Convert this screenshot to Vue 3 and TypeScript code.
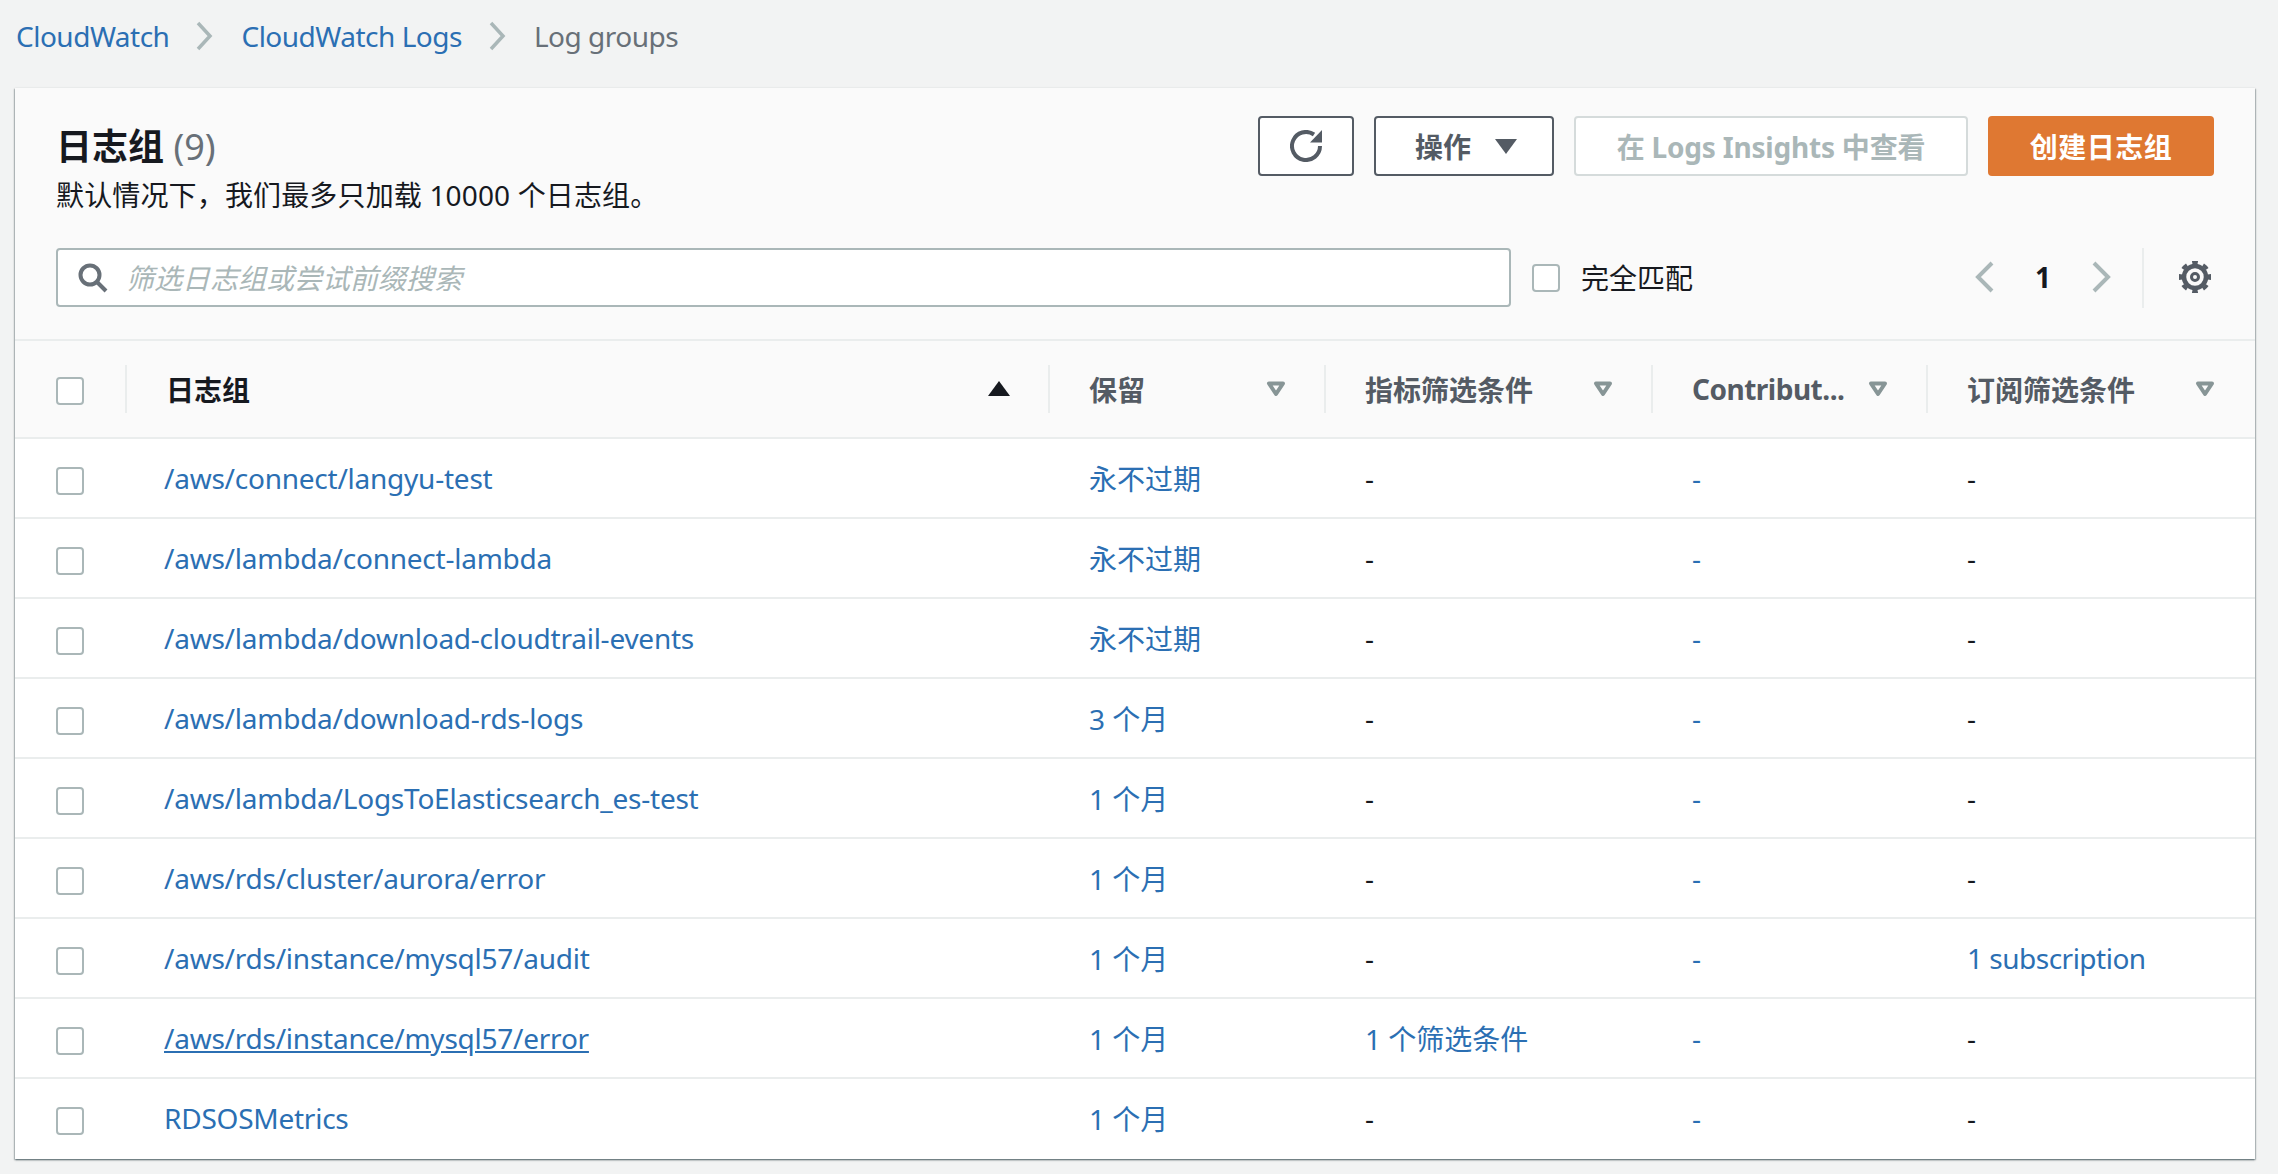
<script setup lang="ts">
interface LogGroup {
  name: string;
  retention: string;
  metric?: string;
  subscription?: string;
  hover?: boolean;
}

const columns = [
  { key: "retention", label: "保留" },
  { key: "metric", label: "指标筛选条件" },
  { key: "contributor", label: "Contribut..." },
  { key: "subscription", label: "订阅筛选条件" },
];

const logGroups: LogGroup[] = [
  { name: "/aws/connect/langyu-test", retention: "永不过期" },
  { name: "/aws/lambda/connect-lambda", retention: "永不过期" },
  { name: "/aws/lambda/download-cloudtrail-events", retention: "永不过期" },
  { name: "/aws/lambda/download-rds-logs", retention: "3 个月" },
  { name: "/aws/lambda/LogsToElasticsearch_es-test", retention: "1 个月" },
  { name: "/aws/rds/cluster/aurora/error", retention: "1 个月" },
  { name: "/aws/rds/instance/mysql57/audit", retention: "1 个月", subscription: "1 subscription" },
  { name: "/aws/rds/instance/mysql57/error", retention: "1 个月", metric: "1 个筛选条件", hover: true },
  { name: "RDSOSMetrics", retention: "1 个月" },
];
</script>

<template>
  <div class="page">
    <nav class="crumbs">
      <a class="link">CloudWatch</a>
      <svg class="crumb-sep" viewBox="0 0 18 30"><path d="M3 2l12 13L3 28" /></svg>
      <a class="link">CloudWatch Logs</a>
      <svg class="crumb-sep" viewBox="0 0 18 30"><path d="M3 2l12 13L3 28" /></svg>
      <span class="crumb-current">Log groups</span>
    </nav>

    <section class="panel">
      <header class="panel-head">
        <div class="head-top">
          <div class="titles">
            <h1 class="title">日志组 <span class="count">(9)</span></h1>
            <p class="desc">默认情况下，我们最多只加载 10000 个日志组。</p>
          </div>
          <div class="actions">
            <button class="btn btn-icon">
              <svg width="32" height="32" viewBox="0 0 32 32" class="refresh">
                <path d="M30 16a14 14 0 1 1-6-11.5" />
                <path class="solid" d="M32 0v12.5H20z" />
              </svg>
            </button>
            <button class="btn btn-menu">
              操作
              <svg width="22" height="16" viewBox="0 0 22 16"><path class="solid" d="M0 1h22L11 16z" /></svg>
            </button>
            <button class="btn btn-disabled">在 Logs Insights 中查看</button>
            <button class="btn btn-primary">创建日志组</button>
          </div>
        </div>
        <div class="head-filter">
          <div class="search">
            <svg width="32" height="32" viewBox="0 0 32 32" class="search-icon">
              <circle cx="13" cy="13" r="9.5" />
              <path d="M20 20l9 9" />
            </svg>
            <input class="search-input" placeholder="筛选日志组或尝试前缀搜索" />
          </div>
          <span class="checkbox"></span>
          <span class="exact">完全匹配</span>
          <div class="pager">
            <svg class="pager-arrow" viewBox="0 0 20 32"><path d="M17 2L3 16l14 14" /></svg>
            <span class="page-num">1</span>
            <svg class="pager-arrow" viewBox="0 0 20 32"><path d="M3 2l14 14L3 30" /></svg>
          </div>
          <div class="settings">
            <svg width="32" height="32" viewBox="0 0 32 32" class="gear">
              <circle class="gear-body" cx="16" cy="16" r="11" />
              <circle class="gear-teeth" cx="16" cy="16" r="14.5" pathLength="80" />
              <circle class="gear-hub" cx="16" cy="16" r="3.5" />
            </svg>
          </div>
        </div>
      </header>

      <div class="table-head grid">
        <div class="cell-check"><span class="checkbox"></span></div>
        <div class="th th-name">
          <span>日志组</span>
          <svg width="22" height="16" viewBox="0 0 22 16"><path class="sort" d="M0 15h22L11 0z" /></svg>
        </div>
        <div v-for="col in columns" :key="col.key" class="th">
          <span :class="{ condensed: col.key === 'contributor' }">{{ col.label }}</span>
          <svg width="20" height="16" viewBox="0 0 20 16"><path class="filter" d="M3 2.5h14L10 13z" /></svg>
        </div>
      </div>

      <div v-for="group in logGroups" :key="group.name" class="row grid">
        <div class="cell-check"><span class="checkbox"></span></div>
        <div class="td td-name"><a class="link" :class="{ hovered: group.hover }">{{ group.name }}</a></div>
        <div class="td"><a class="link">{{ group.retention }}</a></div>
        <div class="td">
          <a v-if="group.metric" class="link">{{ group.metric }}</a>
          <template v-else>-</template>
        </div>
        <div class="td"><a class="link">-</a></div>
        <div class="td">
          <a v-if="group.subscription" class="link condensed">{{ group.subscription }}</a>
          <template v-else>-</template>
        </div>
      </div>
    </section>
  </div>
</template>

<style>
body {
  background: #f2f3f3;
}
</style>

<style scoped>
.page {
  width: 2278px;
  height: 1174px;
  overflow: hidden;
  font-family: "Noto Sans", "Noto Sans CJK SC", sans-serif;
  font-size: 28px;
  color: #16191f;
  background: #f2f3f3;
}

.link {
  color: #2b6fb3;
}

.hovered {
  text-decoration: underline;
}

.condensed {
  letter-spacing: -0.5px;
}

.crumbs {
  height: 88px;
  padding: 0 0 16px 16px;
  box-sizing: border-box;
  display: flex;
  align-items: center;
  gap: 26px;
  letter-spacing: -0.5px;
}

.crumb-sep {
  width: 18px;
  height: 30px;
  margin-right: 2px;
  fill: none;
  stroke: #aab7b8;
  stroke-width: 3.5;
}

.crumb-current {
  color: #687078;
}

.panel {
  width: 2240px;
  margin-left: 15px;
  background: #fff;
  box-shadow: 0 1px 2px 0 rgba(0, 28, 36, 0.5), 1px 1px 1px 0 rgba(0, 28, 36, 0.15), -1px 1px 1px 0 rgba(0, 28, 36, 0.15);
}

.panel-head {
  height: 253px;
  box-sizing: border-box;
  padding: 28px 41px 0 41px;
  background: #fafafa;
  border-bottom: 2px solid #eaeded;
}

.head-top {
  display: flex;
  justify-content: space-between;
  height: 132px;
}

.titles {
  padding-top: 7px;
}

.title {
  margin: 0;
  font-size: 36px;
  line-height: 48px;
  font-weight: 700;
}

.count {
  font-weight: 400;
  color: #687078;
}

.desc {
  margin: 4px 0 0;
  line-height: 40px;
  letter-spacing: 0.15px;
}

.actions {
  display: flex;
  gap: 20px;
  height: 60px;
}

.btn {
  height: 60px;
  box-sizing: border-box;
  border-radius: 4px;
  border: 2px solid #545b64;
  background: #fff;
  color: #545b64;
  font: 700 28px "Noto Sans", "Noto Sans CJK SC", sans-serif;
  display: flex;
  align-items: center;
  justify-content: center;
  padding: 0;
}

.btn-icon {
  width: 96px;
}

.btn-menu {
  width: 180px;
  gap: 24px;
  padding-left: 4px;
}

.btn-disabled {
  width: 394px;
  border-color: #d5dbdb;
  color: #aab7b8;
  letter-spacing: -0.2px;
}

.btn-primary {
  width: 226px;
  border: none;
  background: #df7832;
  color: #fff;
  letter-spacing: 0.5px;
}

.refresh {
  fill: none;
  stroke: #545b64;
  stroke-width: 4;
}

.solid {
  fill: #545b64;
  stroke: none;
}

.head-filter {
  display: flex;
  align-items: center;
  height: 60px;
}

.search {
  width: 1455px;
  height: 59px;
  margin-bottom: 1px;
  box-sizing: border-box;
  display: flex;
  align-items: center;
  gap: 17px;
  padding-left: 19px;
  border: 2px solid #aab7b8;
  border-radius: 4px;
  background: #fff;
}

.search-icon {
  flex: none;
  fill: none;
  stroke: #687078;
  stroke-width: 4;
}

.search-input {
  flex: 1;
  border: none;
  outline: none;
  background: transparent;
  font: italic 400 28px "Noto Sans", "Noto Sans CJK SC", sans-serif;
  padding: 0;
}

.search-input::placeholder {
  color: #aab7b8;
  opacity: 1;
}

.checkbox {
  display: block;
  flex: none;
  width: 28px;
  height: 28px;
  box-sizing: border-box;
  border: 2px solid #aab7b8;
  border-radius: 4px;
  background: #fff;
}

.head-filter .checkbox {
  margin-left: 21px;
}

.exact {
  margin: 0 0 2px 21px;
}

.pager {
  margin: 0 0 2px auto;
  display: flex;
  align-items: center;
  gap: 36px;
  padding-right: 31px;
}

.pager-arrow {
  width: 20px;
  height: 32px;
  fill: none;
  stroke: #aab7b8;
  stroke-width: 4;
}

.page-num {
  width: 24px;
  text-align: center;
  font-weight: 700;
}

.settings {
  width: 72px;
  height: 60px;
  box-sizing: border-box;
  border-left: 2px solid #eaeded;
  display: flex;
  align-items: center;
  justify-content: flex-end;
  padding: 0 3px 2px 0;
}

.gear {
  fill: none;
  stroke: #545b64;
}

.gear-body {
  stroke-width: 4.5;
}

.gear-teeth {
  stroke-width: 3.5;
  stroke-dasharray: 5 5;
  stroke-dashoffset: 2.5;
}

.gear-hub {
  stroke-width: 3;
}

.grid {
  display: grid;
  grid-template-columns: 110px 923px 276px 327px 275px 329px;
}

.table-head {
  height: 96px;
  align-items: center;
  background: #fafafa;
  border-bottom: 2px solid #eaeded;
}

.cell-check {
  display: flex;
  padding: 4px 0 0 41px;
}

.row .cell-check {
  padding-top: 6px;
}

.th {
  height: 48px;
  display: flex;
  align-items: center;
  justify-content: space-between;
  padding: 0 38px 0 39px;
  border-left: 2px solid #eaeded;
  box-sizing: border-box;
  font-weight: 700;
  color: #545b64;
}

.th:last-child {
  padding-right: 40px;
}

.th-name {
  color: #16191f;
}

.sort {
  fill: #16191f;
}

.filter {
  fill: none;
  stroke: #879596;
  stroke-width: 4;
  stroke-linejoin: round;
}

.row {
  height: 80px;
  align-items: center;
  border-bottom: 2px solid #eaeded;
  box-sizing: border-box;
}

.row:last-child {
  padding-bottom: 2px;
  border-bottom: none;
}

.td {
  padding-left: 41px;
}

.td-name {
  padding-left: 39px;
  letter-spacing: -0.24px;
}
</style>
